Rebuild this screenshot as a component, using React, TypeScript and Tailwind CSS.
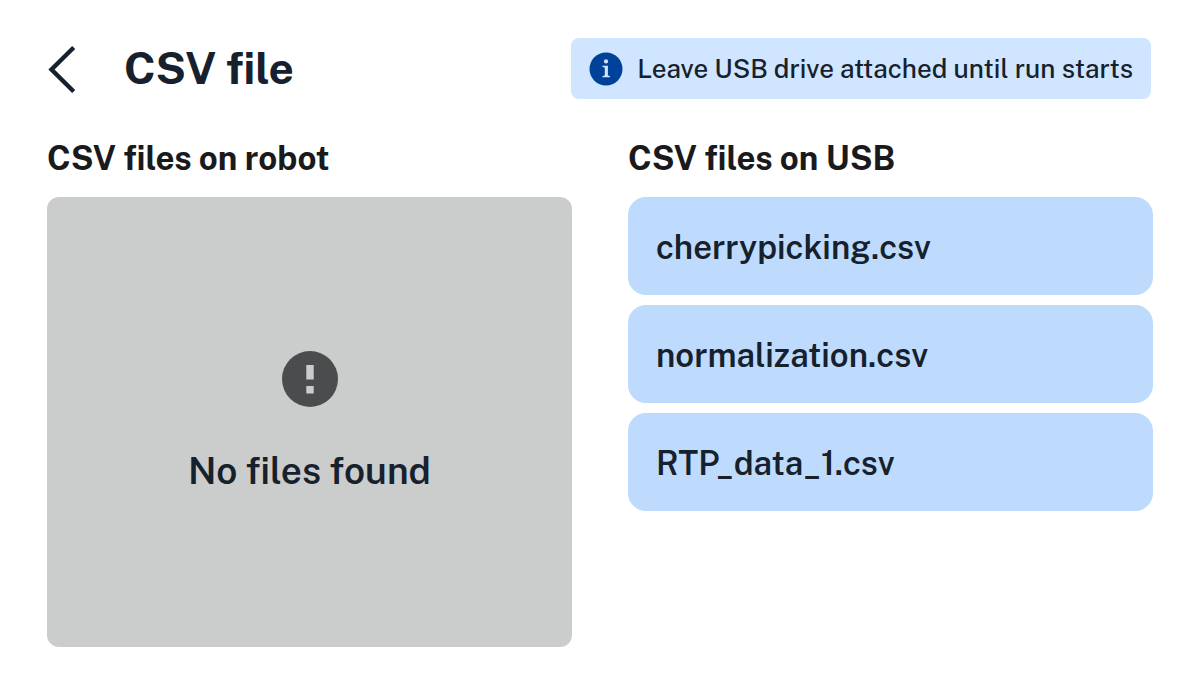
const usbFiles = ['cherrypicking.csv', 'normalization.csv', 'RTP_data_1.csv']

function BackIcon() {
  return (
    <svg viewBox="0 0 30 48" className="h-12 w-[30px]" fill="none" stroke="#16212D" strokeWidth="4.4" aria-hidden="true">
      <path d="M26.700 2.500L4.500 24.500L26.700 46.500" />
    </svg>
  )
}

function InfoIcon() {
  return (
    <svg viewBox="0 0 34 34" className="size-[34px] shrink-0" aria-hidden="true">
      <circle cx="17" cy="17" r="16.500" fill="#004299" />
      <circle cx="17" cy="9.400" r="2.100" fill="#D0E5FF" />
      <path fill="#D0E5FF" d="M13.500 13.700h5.400v9.700l2 .5v1.300h-7.400v-1.300l2.300-.5v-7.900l-2.300-.5z" />
    </svg>
  )
}

function AlertIcon() {
  return (
    <svg viewBox="0 0 56 56" className="size-14" aria-hidden="true">
      <circle cx="28" cy="28" r="28" fill="#4A4C4E" />
      <path fill="#CBCCCC" d="M24.300 14h7.400v14.500h-7.400zM24.300 35h7.400v7.400h-7.400z" />
    </svg>
  )
}

export default function App() {
  return (
    <main className="min-h-screen bg-white px-[47px] pt-[38px] pb-[47px] font-['Public_Sans','Inter',sans-serif] text-[#16212D]">
      <header className="flex items-center justify-between pr-[2px]">
        <div className="flex items-center gap-[47px]">
          <button type="button" aria-label="Back">
            <BackIcon />
          </button>
          <h1 className="text-[44px] leading-[61px] font-bold">CSV file</h1>
        </div>
        <div role="status" className="flex h-[61px] items-center gap-[14px] rounded-lg bg-[#D0E5FF] px-[18px] text-[26px] font-medium">
          <InfoIcon />
          <p>Leave USB drive attached until run starts</p>
        </div>
      </header>

      <div className="mt-[39px] grid grid-cols-2 gap-14">
        <section className="flex flex-col gap-[19px]">
          <h2 className="text-[33px] leading-10 font-bold text-[#1A1A1C]">CSV files on robot</h2>
          <div className="flex min-h-[450px] flex-col items-center justify-center gap-10 rounded-xl bg-[#CBCCCC] pt-[2px]">
            <AlertIcon />
            <p className="text-[37px] leading-12 font-semibold">No files found</p>
          </div>
        </section>

        <section className="flex flex-col gap-[19px]">
          <h2 className="text-[33px] leading-10 font-bold text-[#1A1A1C]">CSV files on USB</h2>
          <ul className="flex flex-col gap-[10px]">
            {usbFiles.map((file) => (
              <li key={file}>
                <button type="button" className="block h-[98px] w-full rounded-[18px] bg-[#BEDBFD] px-7 pt-[3px] text-left text-[33px] font-semibold">
                  {file}
                </button>
              </li>
            ))}
          </ul>
        </section>
      </div>
    </main>
  )
}
